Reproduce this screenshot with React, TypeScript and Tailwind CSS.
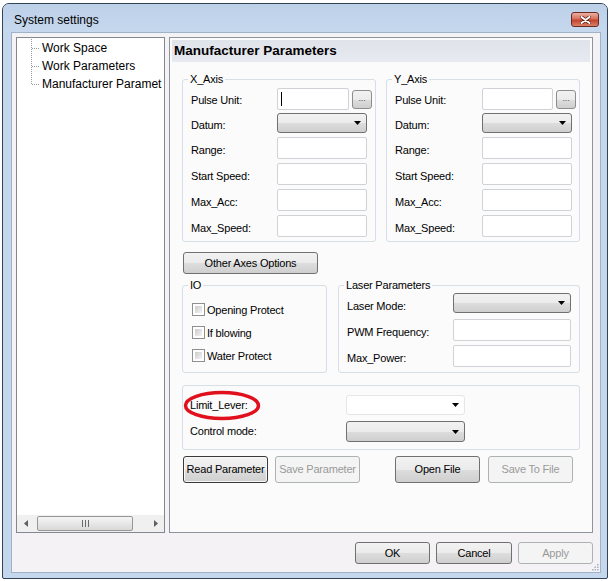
import React from 'react';

// Win7-style "System settings" dialog

const face =
  'bg-[linear-gradient(to_bottom,#f2f2f2_0%,#ebebeb_50%,#dddddd_51%,#cfcfcf_100%)]';

function Arrow() {
  return (
    <svg width="7" height="4" viewBox="0 0 7 4" className="shrink-0">
      <polygon points="0,0 7,0 3.5,4" fill="#000" />
    </svg>
  );
}

function TextBox({ w, focused }: { w: string; focused?: boolean }) {
  return (
    <div
      className={`${w} h-[22px] shrink-0 bg-white border border-[#cfd2d6] rounded-[2px] flex items-center pl-[3px]`}
    >
      {focused && <span className="w-px h-[14px] bg-black" />}
    </div>
  );
}

function Combo({ w, h, flat }: { w: string; h: string; flat?: boolean }) {
  return (
    <div
      className={`${w} ${h} shrink-0 rounded-[3px] border flex items-center justify-end pr-[5px] ${
        flat ? 'bg-white border-[#e4e6ea]' : `${face} border-[#707070]`
      }`}
    >
      <Arrow />
    </div>
  );
}

function DotsButton() {
  return (
    <div
      className={`w-[20px] h-[19px] ml-[3px] shrink-0 rounded-[3px] border border-[#8d8d8d] ${face} flex items-center justify-center text-[9px] leading-none text-[#555] pb-[2px]`}
    >
      ...
    </div>
  );
}

function Button({
  children,
  w,
  h,
  disabled,
  focused,
}: {
  children: React.ReactNode;
  w: string;
  h: string;
  disabled?: boolean;
  focused?: boolean;
}) {
  return (
    <div
      className={`${w} ${h} shrink-0 rounded-[3px] border flex items-center justify-center ${
        disabled
          ? 'bg-[#f4f4f4] border-[#adb2b5] text-[#9a9a9a]'
          : focused
          ? `${face} border-[#3a3a3a] shadow-[inset_0_0_0_1px_#f7f7f7]`
          : `${face} border-[#707070]`
      }`}
    >
      {children}
    </div>
  );
}

// group box: padding lives on the inner div so the legend stays at its own offset
function Group({
  legend,
  className,
  inner,
  children,
}: {
  legend?: string;
  className: string;
  inner: string;
  children: React.ReactNode;
}) {
  return (
    <fieldset className={`border border-[#d5dfe5] rounded-[3px] shrink-0 ${className}`}>
      {legend && <legend className="ml-[5px] px-[2px] leading-[13px]">{legend}</legend>}
      <div className={inner}>{children}</div>
    </fieldset>
  );
}

function AxisGroup({ title, labelW, pulseW }: { title: string; labelW: string; pulseW: string }) {
  const rows = ['Range:', 'Start Speed:', 'Max_Acc:', 'Max_Speed:'];
  return (
    <Group legend={title} className="w-[194px]" inner="pl-[8px] pt-[2px] pb-[4px]">
      <div className="flex items-center h-[22px]">
        <span className={`${labelW} shrink-0 pt-[3px]`}>Pulse Unit:</span>
        <TextBox w={pulseW} focused={title === 'X_Axis'} />
        <DotsButton />
      </div>
      <div className="flex items-center h-[20px] mt-[3px]">
        <span className={`${labelW} shrink-0 pt-[5px]`}>Datum:</span>
        <Combo w="w-[90px]" h="h-[20px]" />
      </div>
      {rows.map((r) => (
        <div key={r} className="flex items-center h-[22px] mt-[4px]">
          <span className={`${labelW} shrink-0 pt-[5px]`}>{r}</span>
          <TextBox w="w-[90px]" />
        </div>
      ))}
    </Group>
  );
}

function Checkbox({ label }: { label: string }) {
  return (
    <div className="flex items-center h-[23px]">
      <span className="w-[13px] h-[13px] shrink-0 border border-[#8e8f8f] bg-white p-[2px]">
        <span className="block w-full h-full bg-linear-to-br from-[#cbcbcb] to-[#f4f4f4]" />
      </span>
      <span className="ml-[2px] pt-[1px]">{label}</span>
    </div>
  );
}

function CloseButton() {
  return (
    <div className="w-[28px] h-[15px] rounded-[3px] border border-[#6e2a21] bg-[linear-gradient(to_bottom,#eab1a3_0%,#d7705d_45%,#c4432c_55%,#d9806a_100%)] flex items-center justify-center">
      <svg width="11" height="8" viewBox="0 0 11 8">
        <path d="M1.5 1 L9.5 7 M9.5 1 L1.5 7" stroke="#5a1a12" strokeWidth="3.4" strokeLinecap="round" />
        <path d="M1.5 1 L9.5 7 M9.5 1 L1.5 7" stroke="#fff" strokeWidth="2" strokeLinecap="round" />
      </svg>
    </div>
  );
}

function TreeView() {
  return (
    <div className="w-[149px] h-full shrink-0 border border-[#828790] bg-white flex flex-col">
      <div className="flex-1 flex pl-[13px] pt-[1px] overflow-hidden">
        <svg width="11" height="54" viewBox="0 0 11 54" className="shrink-0">
          <g stroke="#9a9a9a" strokeWidth="1" strokeDasharray="1 1">
            <path d="M1.5 0 V46" />
            <path d="M2 9.5 H10" />
            <path d="M2 27.5 H10" />
            <path d="M2 45.5 H10" />
          </g>
        </svg>
        <div className="flex flex-col text-[12px] whitespace-nowrap pl-[1px]">
          <div className="h-[18px] leading-[18px]">Work Space</div>
          <div className="h-[18px] leading-[18px]">Work Parameters</div>
          <div className="h-[18px] leading-[18px]">Manufacturer Paramet</div>
        </div>
      </div>
      <div className="h-[17px] shrink-0 flex items-center bg-[#f0f0f0]">
        <div className="w-[17px] h-full flex items-center justify-center">
          <svg width="4" height="7" viewBox="0 0 4 7">
            <polygon points="4,0 4,7 0,3.5" fill="#606060" />
          </svg>
        </div>
        <div className="flex-1 h-full flex items-center">
          <div className="ml-[3px] w-[96px] h-[15px] rounded-[2px] border border-[#979797] bg-linear-to-b from-[#f5f5f5] to-[#d9d9d9] flex items-center justify-center">
            <svg width="7" height="7" viewBox="0 0 7 7">
              <g stroke="#6a6a6a" strokeWidth="1">
                <path d="M0.5 0 V7 M3.5 0 V7 M6.5 0 V7" />
              </g>
            </svg>
          </div>
        </div>
        <div className="w-[17px] h-full flex items-center justify-center">
          <svg width="4" height="7" viewBox="0 0 4 7">
            <polygon points="0,0 0,7 4,3.5" fill="#606060" />
          </svg>
        </div>
      </div>
    </div>
  );
}

function ParamsPanel() {
  return (
    <div className="w-[424px] h-full shrink-0 border border-[#8e949c] bg-[#fbfbfb] flex flex-col text-[11px] tracking-[-0.2px]">
      <div className="h-[22px] mx-[2px] mt-[2px] shrink-0 flex items-center pl-[2px] bg-linear-to-b from-[#dfe3ea] to-[#e7eaf0] text-[13.5px] font-bold tracking-normal">
        Manufacturer Parameters
      </div>

      <div className="flex gap-[10px] pl-[12px] mt-[11px]">
        <AxisGroup title="X_Axis" labelW="w-[86px]" pulseW="w-[72px]" />
        <AxisGroup title="Y_Axis" labelW="w-[87px]" pulseW="w-[71px]" />
      </div>

      <div className="mt-[10px] ml-[13px]">
        <Button w="w-[135px]" h="h-[22px]">Other Axes Options</Button>
      </div>

      <div className="flex gap-[11px] pl-[12px] mt-[5px]">
        <Group legend="IO" className="w-[145px]" inner="pl-[9px] pt-[6px] pb-[5px]">
          <Checkbox label="Opening Protect" />
          <Checkbox label="If blowing" />
          <Checkbox label="Water Protect" />
        </Group>
        <Group legend="Laser Parameters" className="w-[242px]" inner="pl-[8px] pt-[1px] pb-[5px]">
          <div className="flex items-center h-[20px]">
            <span className="w-[106px] shrink-0 pt-[6px]">Laser Mode:</span>
            <Combo w="w-[118px]" h="h-[20px]" />
          </div>
          <div className="flex items-center h-[22px] mt-[6px]">
            <span className="w-[106px] shrink-0 pt-[5px]">PWM Frequency:</span>
            <TextBox w="w-[118px]" />
          </div>
          <div className="flex items-center h-[22px] mt-[4px]">
            <span className="w-[106px] shrink-0 pt-[5px]">Max_Power:</span>
            <TextBox w="w-[118px]" />
          </div>
        </Group>
      </div>

      <div className="pl-[12px] mt-[12px]">
        <Group className="relative w-[398px]" inner="pl-[7px] pt-[9px] pb-[7px]">
          <div className="flex items-center h-[20px]">
            <span className="w-[156px] shrink-0">Limit_Lever:</span>
            <Combo w="w-[119px]" h="h-[20px]" flat />
          </div>
          <div className="flex items-center h-[21px] mt-[6px]">
            <span className="w-[156px] shrink-0">Control mode:</span>
            <Combo w="w-[119px]" h="h-[21px]" />
          </div>
          <svg
            width="78"
            height="31"
            viewBox="0 0 78 31"
            className="absolute left-[0px] top-[4px] pointer-events-none"
          >
            <ellipse cx="39" cy="15.5" rx="36.5" ry="13" fill="none" stroke="#e0101c" strokeWidth="3.5" />
          </svg>
        </Group>
      </div>

      <div className="flex items-center pl-[13px] mt-[6px]">
        <Button w="w-[85px]" h="h-[27px]" focused>Read Parameter</Button>
        <div className="ml-[7px]">
          <Button w="w-[85px]" h="h-[27px]" disabled>Save Parameter</Button>
        </div>
        <div className="ml-[35px]">
          <Button w="w-[85px]" h="h-[27px]">Open File</Button>
        </div>
        <div className="ml-[8px]">
          <Button w="w-[85px]" h="h-[27px]" disabled>Save To File</Button>
        </div>
      </div>
    </div>
  );
}

export default function App() {
  return (
    <div className="w-[610px] h-[581px] bg-white pt-[3px] pl-[2px] font-['Liberation_Sans',Arial,sans-serif] text-black">
      <div className="w-[606px] h-[576px] flex flex-col border border-[#33435a] rounded-t-[7px] rounded-b-[2px] bg-[#c4d7ed]">
        {/* title bar */}
        <div className="h-[28px] shrink-0 flex items-center justify-between pl-[11px] pr-[8px] pt-[3px] rounded-t-[6px] bg-linear-to-b from-[#bcd0e8] to-[#c6d8ee]">
          <span className="text-[12px]">System settings</span>
          <CloseButton />
        </div>

        {/* client area */}
        <div className="relative flex-1 ml-[8px] mr-[6px] mb-[5px] border border-[#9fb2c9] bg-[#f4f2f4] flex flex-col pl-[4px] pr-[7px] pt-[4px]">
          <div className="flex gap-[4px] h-[496px] shrink-0">
            <TreeView />
            <ParamsPanel />
          </div>

          <div className="flex justify-end gap-[6px] mt-[9px] text-[11px] tracking-[-0.2px]">
            <Button w="w-[75px]" h="h-[22px]">OK</Button>
            <Button w="w-[76px]" h="h-[22px]">Cancel</Button>
            <Button w="w-[75px]" h="h-[22px]" disabled>Apply</Button>
          </div>

          <svg width="7" height="7" viewBox="0 0 7 7" className="absolute right-[1px] bottom-[1px]">
            <g fill="#a6b3c2">
              <rect x="5" y="0" width="1.5" height="1.5" />
              <rect x="2.5" y="2.5" width="1.5" height="1.5" />
              <rect x="5" y="2.5" width="1.5" height="1.5" />
              <rect x="0" y="5" width="1.5" height="1.5" />
              <rect x="2.5" y="5" width="1.5" height="1.5" />
              <rect x="5" y="5" width="1.5" height="1.5" />
            </g>
          </svg>
        </div>
      </div>
    </div>
  );
}
